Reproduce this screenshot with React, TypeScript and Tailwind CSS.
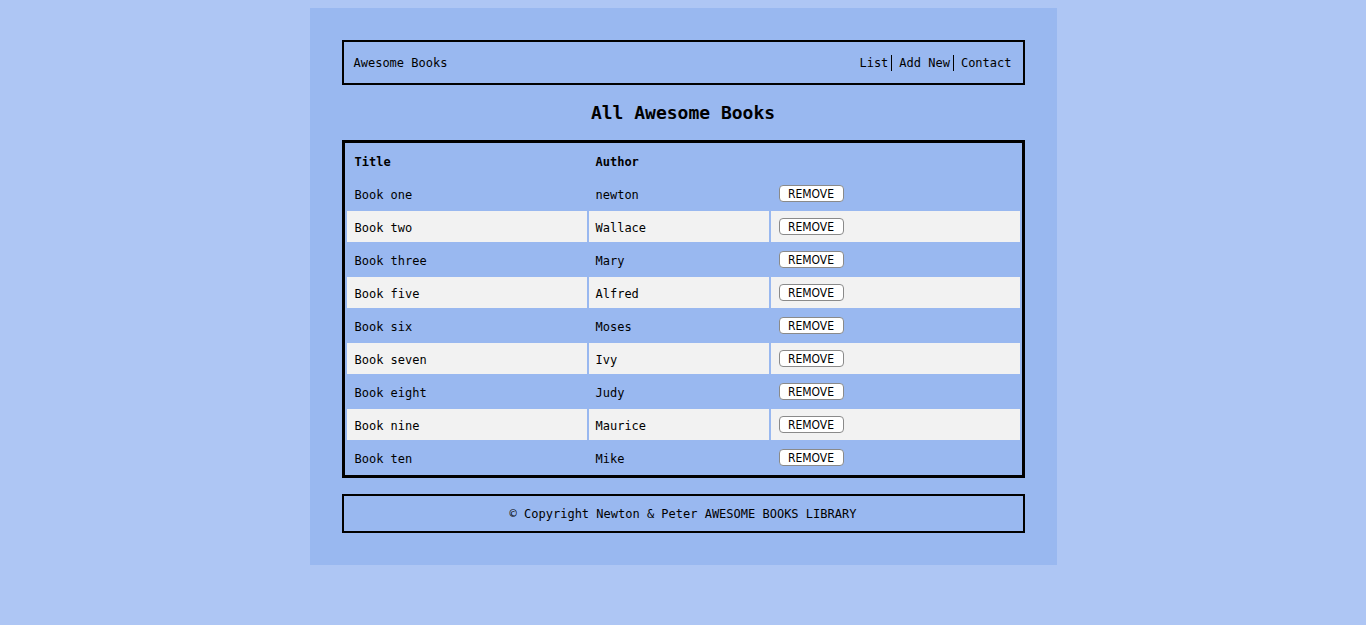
const books = [
  { title: "Book one", author: "newton" },
  { title: "Book two", author: "Wallace" },
  { title: "Book three", author: "Mary" },
  { title: "Book five", author: "Alfred" },
  { title: "Book six", author: "Moses" },
  { title: "Book seven", author: "Ivy" },
  { title: "Book eight", author: "Judy" },
  { title: "Book nine", author: "Maurice" },
  { title: "Book ten", author: "Mike" },
];

export default function App() {
  return (
    <div className="min-h-screen bg-[#aec6f4] pt-[8px] font-['DejaVu_Sans_Mono',monospace] text-[12px] text-black">
      <div className="w-[747px] mx-auto bg-[#99b8f0] px-[32px] pt-[32px] pb-[32px]">
        {/* Nav bar */}
        <header className="flex items-center justify-between h-[45px] border-2 border-black pl-[10px] pr-[11px]">
          <span>Awesome Books</span>
          <nav className="flex items-center">
            <a className="pr-[3px] border-r border-black leading-[16px]">List</a>
            <a className="pl-[7px] pr-[3px] border-r border-black leading-[16px]">Add New</a>
            <a className="pl-[7px] leading-[16px]">Contact</a>
          </nav>
        </header>

        <div className="flex items-center justify-center h-[55px]">
          <h1 className="text-[18px] font-bold">All Awesome Books</h1>
        </div>

        {/* Books table */}
        <table className="w-full border-separate border-spacing-[2px] border-[3px] border-black">
          <thead>
            <tr>
              <th className="w-[240px] h-[31px] pl-2 pr-2 pt-[2px] pb-0 text-left font-bold">Title</th>
              <th className="w-[180px] h-[31px] pl-[7px] pr-2 pt-[2px] pb-0 text-left font-bold">Author</th>
              <th className="h-[31px] px-2"></th>
            </tr>
          </thead>
          <tbody>
            {books.map((b, i) => (
              <tr key={b.title} className={i % 2 === 1 ? "bg-[#f2f2f2]" : ""}>
                <td className="h-[31px] pl-2 pr-2 pt-[2px] pb-0">{b.title}</td>
                <td className="h-[31px] pl-[7px] pr-2 pt-[2px] pb-0">{b.author}</td>
                <td className="h-[31px] px-2">
                  <button className="w-[65px] h-[17px] flex items-center justify-center bg-white border border-[#8a8a8a] rounded-[4px] font-['DejaVu_Sans_Condensed',sans-serif] text-[12px] leading-none">
                    REMOVE
                  </button>
                </td>
              </tr>
            ))}
          </tbody>
        </table>

        <footer className="mt-[16px] h-[39px] border-2 border-black flex items-center justify-center">
          © Copyright Newton &amp; Peter AWESOME BOOKS LIBRARY
        </footer>
      </div>
    </div>
  );
}
